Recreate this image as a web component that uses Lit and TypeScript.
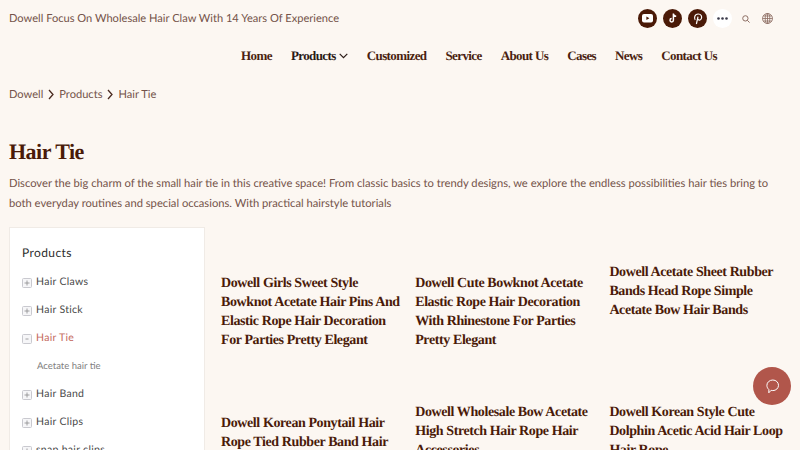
import {LitElement, html, css, svg} from 'lit'
import {customElement} from 'lit/decorators.js'

const navItems = ['Home', 'Products', 'Customized', 'Service', 'About Us', 'Cases', 'News', 'Contact Us']

const categories = [
  {name: 'Hair Claws'},
  {name: 'Hair Stick'},
  {name: 'Hair Tie', open: true},
  {name: 'Acetate hair tie', sub: true},
  {name: 'Hair Band'},
  {name: 'Hair Clips'},
  {name: 'snap hair clips'},
]

const products = [
  {title: 'Dowell Girls Sweet Style Bowknot Acetate Hair Pins And Elastic Rope Hair Decoration For Parties Pretty Elegant', low: true},
  {title: 'Dowell Cute Bowknot Acetate Elastic Rope Hair Decoration With Rhinestone For Parties Pretty Elegant', low: true},
  {title: 'Dowell Acetate Sheet Rubber Bands Head Rope Simple Acetate Bow Hair Bands'},
  {title: 'Dowell Korean Ponytail Hair Rope Tied Rubber Band Hair Accessories For Women', low: true},
  {title: 'Dowell Wholesale Bow Acetate High Stretch Hair Rope Hair Accessories'},
  {title: 'Dowell Korean Style Cute Dolphin Acetic Acid Hair Loop Hair Rope'},
]

const chevron = svg`<path d="M1 1l4 4.500L1 10" fill="none" stroke="currentColor" stroke-width="1.300"/>`

@customElement('app-root')
export class AppRoot extends LitElement {
  static styles = css`
    :host {
      display: block;
      position: relative;
      width: 800px;
      height: 450px;
      overflow: hidden;
      background: #fcf7f2;
      color: #745349;
      font-family: 'Lato', 'Liberation Sans', sans-serif;
      text-rendering: geometricPrecision;
    }
    .top {
      display: flex;
      align-items: center;
      justify-content: space-between;
      height: 37px;
      padding: 0 27px 0 9px;
      font-size: 11.100px;
    }
    .social {
      display: flex;
      align-items: center;
      gap: 6px;
    }
    .round {
      display: flex;
      align-items: center;
      justify-content: center;
      width: 19px;
      height: 19px;
      border-radius: 50%;
      background: #4a1a08;
    }
    .more {
      background: #fff;
    }
    .search {
      margin-left: 4px;
    }
    .globe {
      margin-left: 6px;
    }
    nav {
      display: flex;
      justify-content: flex-end;
      gap: 19px;
      height: 37px;
      padding-right: 83px;
      align-items: center;
      font-family: 'Liberation Serif', serif;
      font-weight: 700;
      font-size: 13px;
      letter-spacing: -0.600px;
      color: #4a1f10;
    }
    nav a {
      display: flex;
      align-items: center;
      gap: 3px;
    }
    nav a.active {
      color: #2a1a16;
    }
    .crumbs {
      display: flex;
      align-items: center;
      gap: 5px;
      margin-top: 6px;
      padding-left: 9px;
      height: 28px;
      font-size: 11.100px;
    }
    .crumbs svg {
      color: #4a2a20;
    }
    h1 {
      margin: 28px 0 0 9px;
      font-family: 'Liberation Serif', serif;
      font-size: 22px;
      letter-spacing: -0.500px;
      line-height: 32px;
      font-weight: 700;
      color: #4a1a08;
    }
    .intro {
      margin: 6px 24px 0 9px;
      font-size: 11.200px;
      line-height: 19.500px;
    }
    .main {
      display: flex;
      margin-top: 14px;
      padding-left: 9px;
    }
    aside {
      flex: none;
      box-sizing: border-box;
      width: 196px;
      height: 300px;
      padding: 14px 12px;
      background: #fff;
      border: 1px solid #f0ebe6;
      color: #4a4a4a;
    }
    aside h2 {
      margin: 0 0 4px;
      height: 22px;
      line-height: 22px;
      font-size: 12px;
      font-weight: 400;
      letter-spacing: 0.400px;
      color: #2e2e2e;
    }
    .cat {
      display: flex;
      align-items: center;
      gap: 4px;
      height: 28px;
      font-size: 10.500px;
      letter-spacing: 0.300px;
    }
    .cat svg {
      margin-top: 2px;
    }
    .cat.open {
      color: #c4695d;
    }
    .cat.sub {
      padding-left: 15px;
      font-size: 9.500px;
      letter-spacing: 0;
      color: #808080;
    }
    .grid {
      display: grid;
      grid-template-columns: repeat(3, 179px);
      grid-auto-rows: 140px;
      column-gap: 15.200px;
      margin: 36px 0 0 16px;
    }
    .card {
      font-family: 'Liberation Serif', serif;
      font-size: 14px;
      letter-spacing: -0.400px;
      line-height: 19px;
      font-weight: 700;
      color: #4a1a08;
    }
    .card.low {
      padding-top: 11px;
    }
    .chat {
      position: absolute;
      left: 753px;
      top: 367px;
      display: flex;
      align-items: center;
      justify-content: center;
      width: 38px;
      height: 38px;
      border-radius: 50%;
      background: #b1564b;
    }
  `

  render() {
    return html`
      <div class="top">
        <span>Dowell Focus On Wholesale Hair Claw With 14 Years Of Experience</span>
        <div class="social">
          <span class="round">
            <svg width="11" height="9" viewBox="0 0 11 9"><rect width="11" height="8.500" rx="2" fill="#fff"/><path d="M4.400 2.400l3 1.850-3 1.850z" fill="#4a1a08"/></svg>
          </span>
          <span class="round">
            <svg width="10" height="11" viewBox="0 0 10 11"><path d="M5.400.6v6.700a1.700 1.700 0 1 1-1.700-1.700M5.400.8c.2 1.500 1.200 2.400 2.800 2.500" fill="none" stroke="#fff" stroke-width="1.500"/></svg>
          </span>
          <span class="round">
            <svg width="10" height="12" viewBox="0 0 10 12"><path d="M2.200 6.800C1 5.400 1.400 1 5.200 1c3 0 3.900 2.400 3.200 4.400C7.700 7.400 5.400 7.600 4.800 6M5 3.600L3.400 11" fill="none" stroke="#fff" stroke-width="1.200"/></svg>
          </span>
          <span class="round more">
            <svg width="11" height="3" viewBox="0 0 11 3" fill="#3a3a4a"><circle cx="1.500" cy="1.500" r="1.300"/><circle cx="5.500" cy="1.500" r="1.300"/><circle cx="9.500" cy="1.500" r="1.300"/></svg>
          </span>
          <svg class="search" width="8" height="8" viewBox="0 0 9 9" fill="none" stroke="#8a6a60" stroke-width="1.100"><circle cx="3.800" cy="3.800" r="3"/><path d="M6 6l2.500 2.500"/></svg>
          <svg class="globe" width="11" height="11" viewBox="0 0 11 11" fill="none" stroke="#8a6a60" stroke-width=".8"><circle cx="5.500" cy="5.500" r="5"/><ellipse cx="5.500" cy="5.500" rx="2.300" ry="5"/><path d="M5.500.5v10M.5 5.500h10M1.200 3h8.600M1.200 8h8.600"/></svg>
        </div>
      </div>
      <nav>
        ${navItems.map(
          (item) => html`<a class=${item === 'Products' ? 'active' : ''}>
            ${item}
            ${item === 'Products'
              ? html`<svg width="9" height="6" viewBox="0 0 9 6"><path d="M.7.8l3.800 3.800L8.300.8" fill="none" stroke="currentColor" stroke-width="1.200"/></svg>`
              : ''}
          </a>`,
        )}
      </nav>
      <div class="crumbs">
        <span>Dowell</span>
        <svg width="6" height="11" viewBox="0 0 6 11">${chevron}</svg>
        <span>Products</span>
        <svg width="6" height="11" viewBox="0 0 6 11">${chevron}</svg>
        <span>Hair Tie</span>
      </div>
      <h1>Hair Tie</h1>
      <p class="intro">
        Discover the big charm of the small hair tie in this creative space! From classic basics to trendy designs, we
        explore the endless possibilities hair ties bring to both everyday routines and special occasions. With practical
        hairstyle tutorials
      </p>
      <div class="main">
        <aside>
          <h2>Products</h2>
          ${categories.map(
            (c) => html`<div class="cat ${c.open ? 'open' : ''} ${c.sub ? 'sub' : ''}">
              ${c.sub
                ? ''
                : html`<svg width="10" height="10" viewBox="0 0 10 10" fill="none">
                    <rect x=".5" y=".5" width="9" height="9" rx="1" fill="#f6f6f8" stroke="#c9c9cf"/>
                    <path d=${c.open ? 'M3.500 5h3' : 'M2.500 5h5M5 2.500v5'} stroke="#8a8a8a" stroke-width=".8"/>
                  </svg>`}
              <span>${c.name}</span>
            </div>`,
          )}
        </aside>
        <div class="grid">
          ${products.map((p) => html`<div class="card ${p.low ? 'low' : ''}">${p.title}</div>`)}
        </div>
      </div>
      <div class="chat">
        <svg width="15" height="15" viewBox="0 0 15 15" fill="none" stroke="#fff" stroke-width="1"><path d="M7.800 1c3.300 0 5.700 2.400 5.700 5.300s-2.400 5.300-5.700 5.300c-.6 0-1.200-.1-1.700-.3L3.800 13.800l.1-3.200C2.700 9.600 1.900 8.100 1.900 6.300 1.900 3.400 4.500 1 7.800 1z"/></svg>
      </div>
    `
  }
}
